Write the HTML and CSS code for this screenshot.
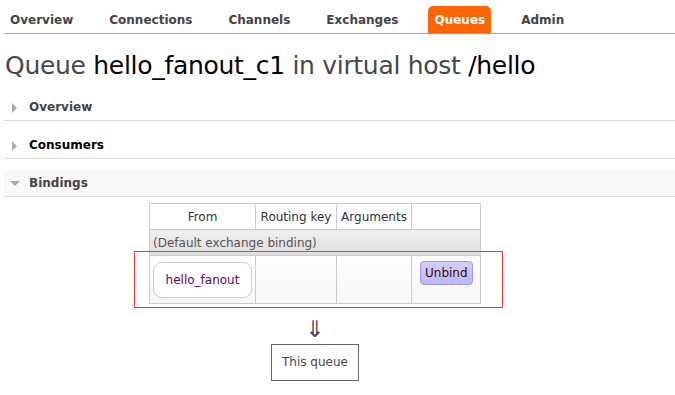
FILE: index.html
```html
<!DOCTYPE html>
<html lang="en">
<head>
  <meta charset="UTF-8">
  <title>Queue hello_fanout_c1</title>
<link rel="stylesheet" href="styles.css">
</head>
<body>
  <ul class="tabs">
    <li><a href="#">Overview</a></li>
    <li><a href="#">Connections</a></li>
    <li><a href="#">Channels</a></li>
    <li><a href="#">Exchanges</a></li>
    <li><a href="#" class="selected">Queues</a></li>
    <li><a href="#">Admin</a></li>
  </ul>

  <h1>Queue <b>hello_fanout_c1</b> in virtual host <b>/hello</b></h1>

  <div class="section">
    <h2 class="section-head"><span class="toggle closed"></span>Overview</h2>
  </div>
  <div class="section">
    <h2 class="section-head hover"><span class="toggle closed"></span>Consumers</h2>
  </div>
  <div class="section">
    <h2 class="section-head open"><span class="toggle opened"></span>Bindings</h2>
    <div class="bindings">
      <div class="table-wrap">
        <table class="list">
          <thead>
            <tr>
              <th class="col-from">From</th>
              <th class="col-key">Routing key</th>
              <th class="col-args">Arguments</th>
              <th class="col-act"></th>
            </tr>
          </thead>
          <tbody>
            <tr class="default-row">
              <td colspan="4">(Default exchange binding)</td>
            </tr>
            <tr class="data-row">
              <td class="from"><span class="exchange">hello_fanout</span></td>
              <td></td>
              <td></td>
              <td class="act"><button class="unbind">Unbind</button></td>
            </tr>
          </tbody>
        </table>
        <!-- highlight drawn over the binding row -->
        <div class="highlight"></div>
      </div>
      <div class="arrow">&#8659;</div>
      <div class="this-queue">This queue</div>
    </div>
  </div>
</body>
</html>
```

FILE: styles.css
```css
body {
  font-family: 'DejaVu Sans', Verdana, sans-serif;
  margin: 0;
  padding: 0 0 0 4px;
  color: #484848;
  background: #fff;
}

/* top tabs */
.tabs {
  list-style: none;
  margin: 0;
  padding: 6px 0 0 0;
  display: flex;
  gap: 24px;
  border-bottom: 1px solid #f7931e;
}

.tabs a {
  display: block;
  padding: 0 6px;
  height: 27px;
  line-height: 28px;
  font-size: 12px;
  font-weight: bold;
  color: #444;
  text-decoration: none;
  border-radius: 5px 5px 0 0;
}

.tabs a.selected {
  background: #f60;
  color: #fff;
}

h1 {
  font-size: 25px;
  font-weight: normal;
  color: #484848;
  margin: 17px 0 0 1px;
  line-height: 30px;
  letter-spacing: -0.3px;
}

h1 b {
  font-weight: normal;
  color: #000;
}

/* collapsible sections */
.section {
  margin-top: 12px;
}

.section:first-of-type {
  margin-top: 14px;
}

.section-head {
  margin: 0;
  height: 25px;
  line-height: 25px;
  font-size: 12px;
  font-weight: bold;
  color: #444;
  border-bottom: 1px solid #ddd;
  display: flex;
  align-items: center;
}

.section-head.hover {
  color: #000;
}

.section-head.open {
  background: #f8f8f8;
}

.toggle {
  width: 25px;
  height: 12px;
  position: relative;
}

.toggle.closed::before {
  content: "";
  position: absolute;
  left: 8px;
  top: 1px;
  border-left: 5px solid #aaa;
  border-top: 5px solid transparent;
  border-bottom: 5px solid transparent;
}

.toggle.opened::before {
  content: "";
  position: absolute;
  left: 6px;
  top: 3px;
  border-top: 5px solid #aaa;
  border-left: 5px solid transparent;
  border-right: 5px solid transparent;
}

/* bindings */
.bindings {
  width: 622px;
  display: flex;
  flex-direction: column;
  align-items: center;
  padding-top: 6px;
}

.table-wrap {
  position: relative;
}

table.list {
  border-collapse: collapse;
  font-size: 12px;
  color: #333;
}

table.list th,
table.list td {
  border: 1px solid #ccc;
  padding: 0 3px;
}

table.list th {
  font-weight: normal;
  height: 25px;
  background: #fff;
}

.col-from { width: 99px; }
.col-key { width: 74px; }
.col-args { width: 68px; }
.col-act { width: 62px; }

.default-row td {
  height: 25px;
  color: #555;
  background: linear-gradient(#f0f0f0, #dcdcdc);
}

.data-row td {
  height: 47px;
  background: linear-gradient(#fff, #f6f6f6);
  vertical-align: middle;
}

.data-row td.act {
  vertical-align: top;
}

.exchange {
  display: block;
  box-sizing: border-box;
  border: 1px solid #ccc;
  border-radius: 9px;
  background: #fff;
  color: #606;
  height: 36px;
  line-height: 34px;
  text-align: center;
}

.unbind {
  font-family: inherit;
  font-size: 12px;
  color: #400;
  background: linear-gradient(#d0d0ff, #b8b8ff);
  border: 1px solid #99f;
  border-radius: 4px;
  padding: 0 4px;
  height: 24px;
  margin: 5px 0 0 5px;
}

.highlight {
  position: absolute;
  left: -15px;
  right: -22px;
  top: 48px;
  height: 55px;
  border: 1px solid #ff3333;
  pointer-events: none;
}

.arrow {
  font-size: 23px;
  line-height: 22px;
  margin-top: 14px;
  color: #444;
}

.this-queue {
  margin-top: 4px;
  border: 1px solid #666;
  padding: 0 10px;
  height: 35px;
  line-height: 35px;
  font-size: 12px;
  color: #484848;
}
```
